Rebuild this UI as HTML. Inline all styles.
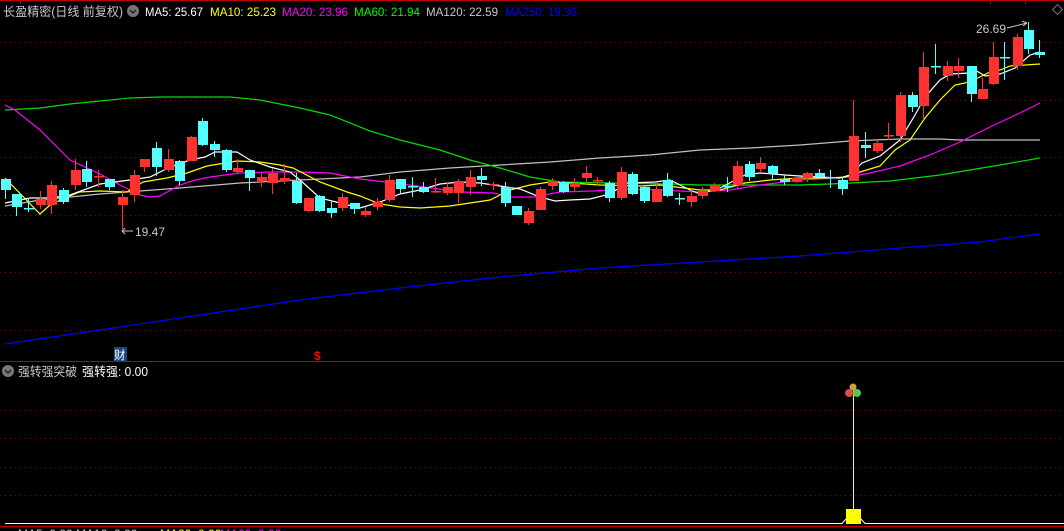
<!DOCTYPE html>
<html><head><meta charset="utf-8">
<style>
html,body{margin:0;padding:0;background:#000;width:1064px;height:531px;overflow:hidden}
svg{display:block}
text{font-family:"Liberation Sans","Noto Sans CJK SC",sans-serif}
</style></head><body>
<svg id="s" width="1064" height="531" viewBox="0 0 1064 531" xmlns="http://www.w3.org/2000/svg">
<rect width="1064" height="531" fill="#000"/>
<line x1="0" y1="0.5" x2="1064" y2="0.5" stroke="#c00000"/>
<g stroke="#c00000"><line x1="20.5" y1="0" x2="20.5" y2="4"/><line x1="990.5" y1="0" x2="990.5" y2="4"/><line x1="1025.5" y1="0" x2="1025.5" y2="4"/></g>
<rect x="1054" y="6" width="7" height="7" fill="none" stroke="#777" transform="rotate(45 1057.5 9.5)"/>
<g stroke="#8a0000" stroke-dasharray="1 4">
<line x1="0" y1="42.5" x2="1064" y2="42.5"/><line x1="0" y1="100.5" x2="1064" y2="100.5"/>
<line x1="0" y1="157.5" x2="1064" y2="157.5"/><line x1="0" y1="215.5" x2="1064" y2="215.5"/>
<line x1="0" y1="272.5" x2="1064" y2="272.5"/><line x1="0" y1="330.5" x2="1064" y2="330.5"/>
<line x1="0" y1="410.5" x2="1064" y2="410.5"/><line x1="0" y1="438.5" x2="1064" y2="438.5"/>
<line x1="0" y1="467.5" x2="1064" y2="467.5"/><line x1="0" y1="495.5" x2="1064" y2="495.5"/>
</g>
<text x="3" y="16" font-size="12.5" fill="#c8c8c8" textLength="120" lengthAdjust="spacingAndGlyphs">长盈精密(日线 前复权)</text>
<circle cx="133" cy="11" r="6" fill="#777"/><path d="M130 10 L133 13 L136 10" stroke="#222" stroke-width="1.5" fill="none"/>
<text x="145" y="16" font-size="12" fill="#fff" textLength="58" lengthAdjust="spacingAndGlyphs">MA5: 25.67</text>
<text x="210" y="16" font-size="12" fill="#ffff00" textLength="66" lengthAdjust="spacingAndGlyphs">MA10: 25.23</text>
<text x="282" y="16" font-size="12" fill="#ff00ff" textLength="66" lengthAdjust="spacingAndGlyphs">MA20: 23.96</text>
<text x="354" y="16" font-size="12" fill="#00ff00" textLength="66" lengthAdjust="spacingAndGlyphs">MA60: 21.94</text>
<text x="426" y="16" font-size="12" fill="#c8c8c8" textLength="72" lengthAdjust="spacingAndGlyphs">MA120: 22.59</text>
<text x="505" y="16" font-size="12" fill="#0000ff" textLength="72" lengthAdjust="spacingAndGlyphs">MA250: 19.36</text>
<g fill="none" stroke-width="1.2">
<polyline stroke="#0000ff" points="5,344 100,330 200,315 300,300 400,288 500,277 600,268 700,262 800,256 900,248 980,242 1040,234"/>
<polyline stroke="#c0c0c0" points="5,206 40,200 70,197 100,194 140,191 180,188 240,183 300,180 340,178 360,177 400,172 450,168 500,165 550,162 600,158 650,155 700,150 750,148 800,145 850,141 900,139 940,139 960,140 1000,140 1040,140"/>
<polyline stroke="#00e000" points="5,110 40,108 70,104 100,101 130,98 160,97 230,97 260,100 300,108 330,115 370,131 400,140 440,150 470,160 500,168 530,177 560,182 610,183 670,184 700,185 800,185 830,184 870,182 890,181 940,175 1000,165 1040,158"/>
<polyline stroke="#ff00ff" points="5,105 15,110 40,130 60,150 70,160 100,174 120,185 140,195 150,197 160,196 180,185 195,180 210,177 240,173 270,172 300,172 330,173 360,179 410,185 460,192 493,193 513,197 533,197 560,192 593,191 627,189 660,190 700,192 730,190 760,185 800,180 835,178 850,177 870,173 900,166 930,155 960,142 990,127 1020,113 1040,103"/>
<polyline stroke="#ffff00" points="5,178 40,214 50,205 67,197 80,192 100,191 127,192 143,182 167,178 187,173 207,166 237,161 260,162 280,165 293,168 320,182 347,192 360,196 380,204 400,207 420,208 450,206 470,203 490,200 510,190 530,185 550,182 570,183 600,185 640,186 660,185 700,190 720,190 745,183 770,180 800,178 830,178 845,177 860,172 880,166 895,150 910,140 925,118 940,100 955,85 965,83 980,77 990,72 1000,70 1010,66 1040,64"/>
<polyline stroke="#ffffff" points="5,203 30,198 50,198 70,195 100,184 130,180 150,177 170,167 190,160 205,157 215,152 237,152 250,160 270,167 290,172 300,180 320,198 340,203 360,208 380,202 400,194 420,190 440,184 460,182 480,183 500,186 520,189 540,197 555,201 570,200 590,199 610,194 627,183 655,182 670,180 690,190 700,194 720,188 745,175 760,173 785,175 800,176 820,177 840,178 850,175 862,163 880,156 900,140 915,115 925,97 940,80 950,74 970,73 975,70 985,76 1000,74 1015,68 1030,55 1040,52"/>
</g>
<g id="candles"></g>
<text x="135" y="236" font-size="12" fill="#c8c8c8">19.47</text>
<path d="M122 231 H133 M122 231 l3 -3 M122 231 l3 3" stroke="#c8c8c8" fill="none"/>
<text x="976" y="33" font-size="12" fill="#c8c8c8">26.69</text>
<path d="M1007 28 L1027 23 M1027 23 l-5 -2 M1027 23 l-4 3" stroke="#c8c8c8" fill="none"/>
<rect x="114" y="347" width="13" height="14" fill="#1a4a80"/>
<text x="114" y="359" font-size="11.5" fill="#fff">财</text>
<text x="314" y="360" font-size="12" fill="#ff0000" font-weight="bold">$</text>
<line x1="0" y1="361.5" x2="1064" y2="361.5" stroke="#c00000"/>
<circle cx="8" cy="371" r="6" fill="#777"/><path d="M5 370 L8 373 L11 370" stroke="#222" stroke-width="1.5" fill="none"/>
<text x="18" y="376" font-size="12.5" fill="#c8c8c8" textLength="59" lengthAdjust="spacingAndGlyphs">强转强突破</text>
<text x="82" y="376" font-size="12.5" fill="#fff" textLength="66" lengthAdjust="spacingAndGlyphs">强转强: 0.00</text>
<line x1="853.5" y1="388" x2="853.5" y2="510" stroke="#ffff00"/>
<rect x="846" y="509" width="15" height="15" fill="#ffff00"/>
<circle cx="853" cy="387" r="3.5" fill="#c8a040"/>
<circle cx="849" cy="393" r="4" fill="#e04848"/>
<circle cx="857" cy="393" r="4" fill="#50c850"/>
<path d="M5 523.5 H842 L846 519 M861 519 L865 523.5 H1064" stroke="#fff" fill="none"/>
<line x1="0" y1="526.5" x2="1064" y2="526.5" stroke="#c00000" stroke-width="1.5"/>
<text x="18" y="538" font-size="12" fill="#c8c8c8">MA5: 0.00 MA10: 0.00</text>
<text x="160" y="538" font-size="12" fill="#ffff00">MA20: 0.00</text>
<text x="220" y="538" font-size="12" fill="#ff00ff">MA60: 0.00</text>
</svg>
<script>
var d=[
[5,'c',179,190,179,199],[16,'c',194,207,194,216],[28,'c',208,210,198,212],[40,'r',199,205,191,209],
[51,'r',185,205,181,214],[63,'c',190,202,188,204],[75,'r',170,185,159,190],[86,'c',169,182,161,187],
[98,'r',176,178,170,187],[109,'c',179,187,179,190],[122,'r',197,205,190,229],[134,'r',175,195,170,202],
[144,'r',159,167,159,172],[156,'c',148,167,142,176],[168,'r',159,170,149,172],[179,'c',161,181,160,185],
[191,'r',137,161,136,161],[202,'c',121,145,118,146],[214,'c',144,150,141,157],[226,'c',150,170,149,172],
[237,'r',168,172,159,173],[249,'c',170,178,170,191],[261,'r',177,181,173,187],[272,'r',173,183,168,194],
[284,'r',178,181,164,184],[296,'c',181,203,173,204],[308,'r',198,211,198,212],[319,'c',196,211,195,212],
[331,'c',208,213,201,218],[342,'r',197,208,193,211],[354,'c',203,209,203,214],
[365,'r',211,215,207,217],[377,'r',202,207,198,210],[389,'r',180,200,175,202],[400,'c',179,189,179,193],
[412,'c',186,188,177,197],[423,'c',187,192,182,193],[435,'r',191,193,178,193],[447,'r',187,193,182,195],
[458,'r',181,193,179,203],[470,'r',177,187,170,195],[481,'c',176,180,168,186],[493,'r',184,186,182,190],
[505,'c',187,203,182,207],[516,'c',206,215,206,215],[528,'r',211,223,208,225],[540,'r',189,210,187,210],
[552,'r',181,186,178,190],[563,'c',182,192,181,193],[574,'r',183,187,178,192],[586,'r',173,178,166,185],
[597,'r',180,182,177,185],[609,'c',183,198,181,202],[621,'r',172,198,167,200],[632,'c',174,194,172,195],
[644,'c',187,201,186,203],[656,'r',189,202,184,202],[667,'c',180,196,173,197],[679,'c',198,200,193,205],
[691,'r',196,202,190,207],[702,'r',191,196,187,199],
[714,'r',185,191,183,192],[727,'c',186,188,177,192],[737,'r',166,185,161,188],[749,'c',164,177,161,181],
[760,'r',163,169,157,172],[772,'c',166,174,165,180],[784,'c',179,182,175,185],[796,'r',178,182,177,183],
[807,'r',173,178,172,182],[819,'c',173,177,169,177],[830,'c',177,179,170,188],[842,'c',180,189,177,195],
[853,'r',136,181,100,181],[865,'c',145,148,132,158],[877,'r',143,151,140,153],[888,'r',135,137,123,140],
[900,'r',95,136,92,142],[912,'c',95,107,92,112],[923,'r',67,106,52,120],[935,'c',66,68,44,74],
[947,'r',66,76,61,81],[958,'r',66,71,58,78],[971,'c',66,94,66,102],[982,'r',89,99,78,99],
[993,'r',57,84,42,85],[1004,'c',57,59,42,80],[1017,'r',37,66,34,70],[1028,'c',30,49,22,54],[1039,'c',52,55,40,58]];
var g=document.getElementById('candles'),h='';
d.forEach(function(c){var col=c[1]=='r'?'#ff3232':'#54ffff';
h+='<line x1="'+(c[0]+0.5)+'" y1="'+c[4]+'" x2="'+(c[0]+0.5)+'" y2="'+c[5]+'" stroke="'+col+'"/>';
var hh=Math.max(c[3]-c[2],1);
if(hh<=2){h+='<rect x="'+(c[0]-4)+'" y="'+c[2]+'" width="10" height="1.5" fill="'+col+'"/>';}
else h+='<rect x="'+(c[0]-4)+'" y="'+c[2]+'" width="10" height="'+hh+'" fill="'+col+'"/>';});
g.innerHTML=h;
</script>
</body></html>
